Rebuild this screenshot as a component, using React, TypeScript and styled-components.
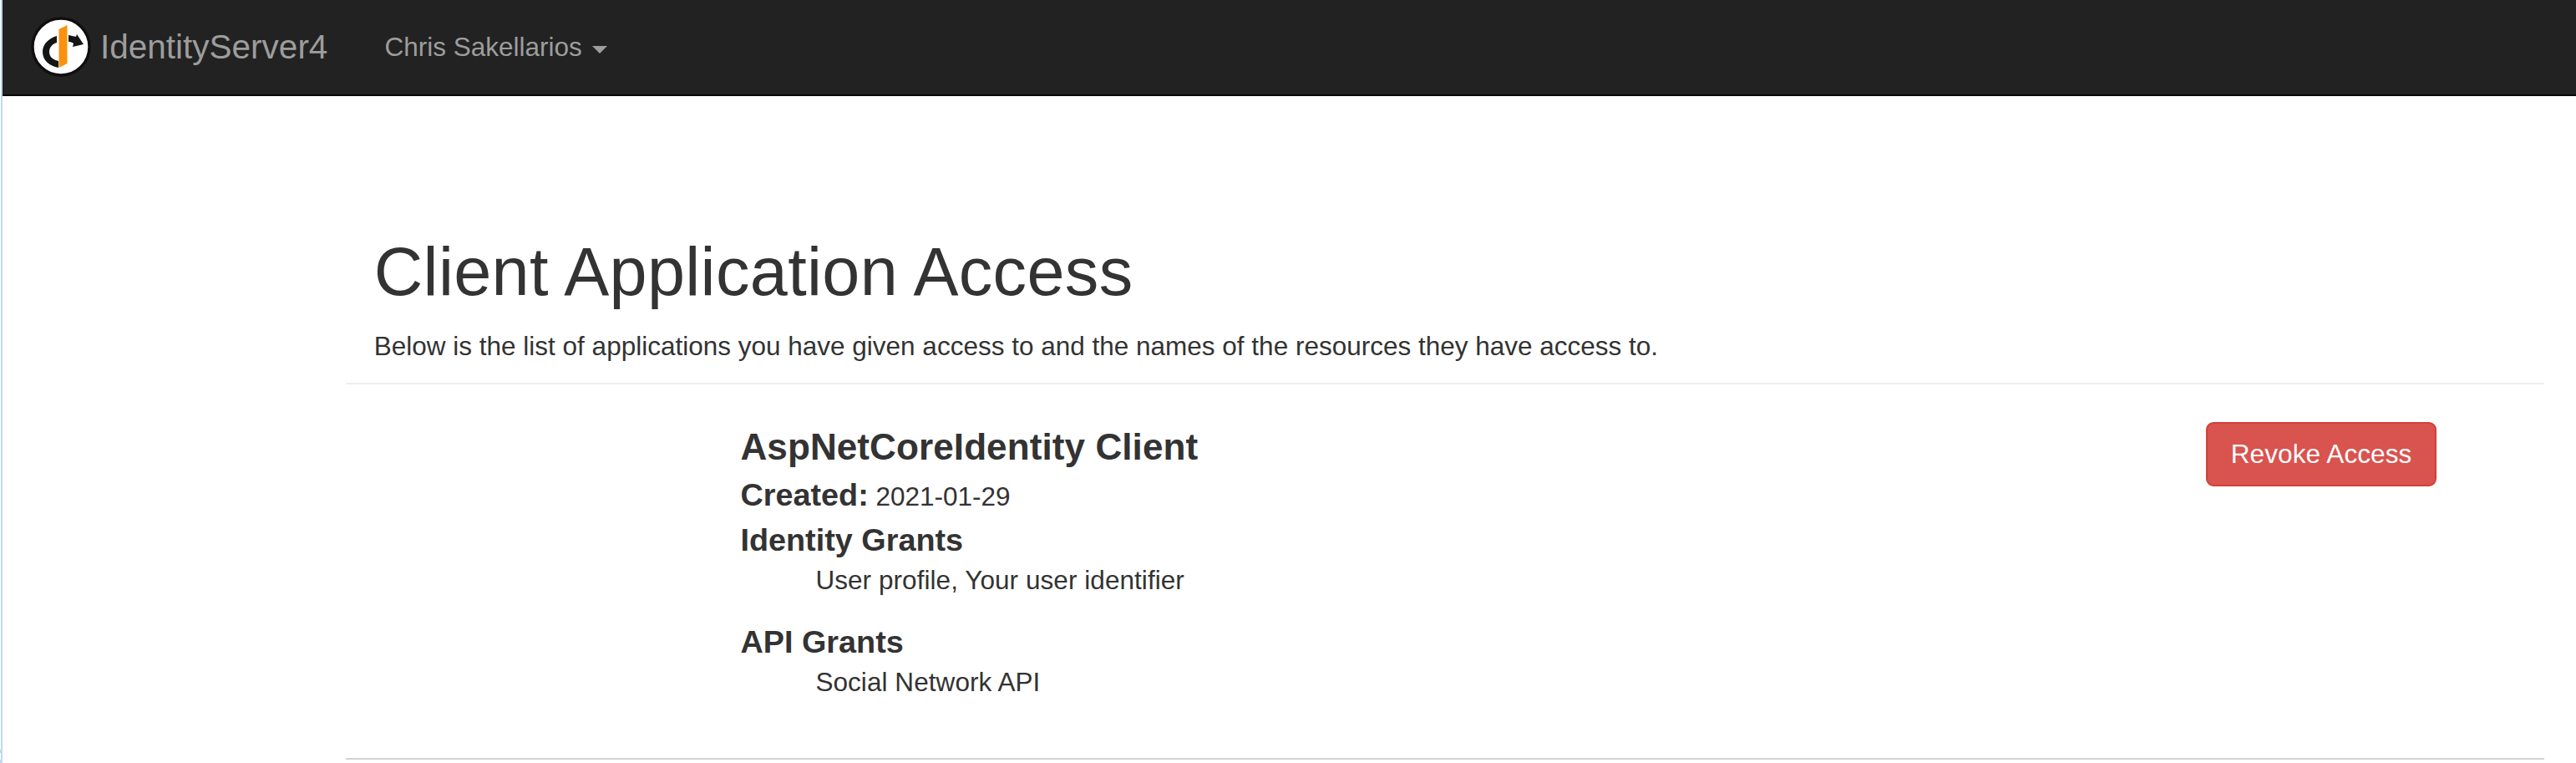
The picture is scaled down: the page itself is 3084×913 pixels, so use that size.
import React from "react";
import styled, { createGlobalStyle } from "styled-components";

const GlobalStyle = createGlobalStyle`
  *, *::before, *::after { box-sizing: border-box; }
  body {
    margin: 0;
    background: #fff;
    color: #333;
    font: 31.5px/45px "Liberation Sans", Arial, sans-serif;
    overflow: hidden;
  }
`;

const Screen = styled.div`
  display: flex;
  height: 913px;
  overflow: hidden;
`;

const WindowEdge = styled.div`
  display: flex;
  flex-direction: column;
  flex: none;
  width: 3px;
  border-right: 2px solid #c3d7ef;
`;

const EdgeMark = styled.span<{ $before: number }>`
  height: 4px;
  margin-top: ${(p) => p.$before}px;
  background: #c3d7ef;
`;

const Page = styled.div`
  flex: 1;
  min-width: 0;
`;

const Navbar = styled.nav`
  display: flex;
  align-items: flex-start;
  height: 115px;
  background: #222;
  border-bottom: 2px solid #080808;
  color: #9d9d9d;
`;

const Brand = styled.a`
  display: flex;
  padding: 20px 0 0 34px;
  font-size: 40.5px;
`;

const Logo = styled.svg`
  display: block;
  width: 72px;
  height: 72px;
`;

const BrandName = styled.span`
  padding: 14px 0 0 11px;
`;

const UserMenu = styled.a`
  display: flex;
  align-items: center;
  margin: 34px 0 0 68px;
`;

const Caret = styled.span`
  margin: 5px 0 0 12px;
  border: 9px solid transparent;
  border-top-color: currentColor;
  border-bottom: 0;
`;

const Content = styled.main`
  width: 2632px;
  height: 628px;
  margin: 166px 0 0 411px;
  border-bottom: 2px solid #d3d3d3;
`;

const PageHeader = styled.header`
  height: 179px;
  padding-left: 33.75px;
  border-bottom: 2px solid #eee;
`;

const Title = styled.h1`
  margin: 0 0 22px;
  font-size: 81px;
  font-weight: 500;
  line-height: 89px;
  letter-spacing: 0.33px;
`;

const GrantRow = styled.section`
  display: grid;
  grid-template-columns: 2fr 8fr 2fr;
  padding-top: 45px;
`;

const Details = styled.div`
  grid-column: 2;
  padding: 0 33.75px;
`;

const ClientName = styled.div`
  font-size: 44.1px;
  font-weight: 700;
  line-height: 60px;
  letter-spacing: 0.06px;
`;

const Label = styled.span`
  font-size: 37.8px;
  font-weight: 700;
`;

const Created = styled.div`
  height: 54px;
  line-height: 54px;
`;

const GrantType = styled(Created)`
  height: 53px;
`;

const GrantList = styled.div`
  margin-bottom: 23.5px;
  padding-left: 90px;
  letter-spacing: 0.06px;
`;

const Actions = styled.div`
  padding: 0 33.75px;
`;

const RevokeButton = styled.button`
  display: block;
  width: 276px;
  height: 77px;
  padding: 0 0 1px;
  border: 2px solid #d43f3a;
  border-radius: 9px;
  background: #d9534f;
  color: #fff;
  font: inherit;
  letter-spacing: 0.1px;
`;

const grants = [
  { label: "Identity Grants", names: "User profile, Your user identifier" },
  { label: "API Grants", names: "Social Network API" },
];

export default function App() {
  return (
    <>
      <GlobalStyle />
      <Screen>
        <WindowEdge>
          <EdgeMark $before={897} />
          <EdgeMark $before={8} />
        </WindowEdge>
        <Page>
          <Navbar>
            <Brand>
              <Logo viewBox="0 0 72 72">
                <circle cx="36" cy="36" r="34" fill="#fff" stroke="#120e0f" strokeWidth="3.4" />
                <path d="M31 23 C21 26 14 33 14 42 C14 52 22 59 33 61 V53 C25 51 22 47 22 42 C22 37 25 33 31 31 Z" fill="#151515" />
                <path d="M45 22 C48 22.5 51 23.5 54 24 L55 21 L63 33 L50 36 L51 32 C49 30.5 47 30 45 30 Z" fill="#151515" />
                <path d="M33.5 15 L43.5 10 V56 L33.5 61 Z" fill="#fa920f" />
              </Logo>
              <BrandName>IdentityServer4</BrandName>
            </Brand>
            <UserMenu>
              Chris Sakellarios
              <Caret />
            </UserMenu>
          </Navbar>
          <Content>
            <PageHeader>
              <Title>Client Application Access</Title>
              <div>
                Below is the list of applications you have given access to and the names of the
                resources they have access to.
              </div>
            </PageHeader>
            <GrantRow>
              <Details>
                <ClientName>AspNetCoreIdentity Client</ClientName>
                <Created>
                  <Label>Created:</Label> 2021-01-29
                </Created>
                {grants.map((g) => (
                  <React.Fragment key={g.label}>
                    <GrantType>
                      <Label>{g.label}</Label>
                    </GrantType>
                    <GrantList>{g.names}</GrantList>
                  </React.Fragment>
                ))}
              </Details>
              <Actions>
                <RevokeButton>Revoke Access</RevokeButton>
              </Actions>
            </GrantRow>
          </Content>
        </Page>
      </Screen>
    </>
  );
}
